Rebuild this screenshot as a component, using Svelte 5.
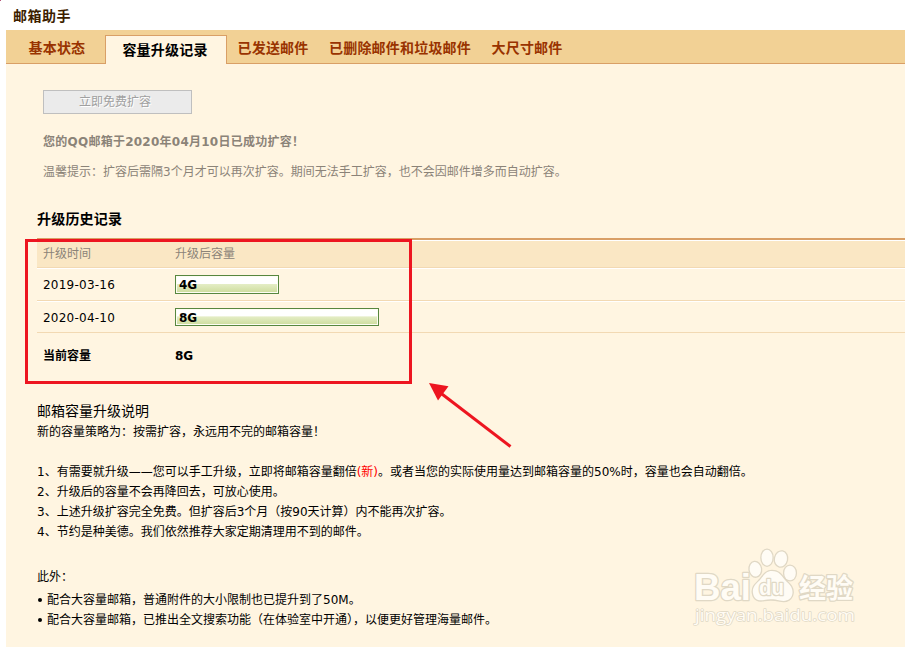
<script>
	let activeTab = 1;

	const tabs = ['基本状态', '容量升级记录', '已发送邮件', '已删除邮件和垃圾邮件', '大尺寸邮件'];

	const history = [
		{ date: '2019-03-16', size: 4, width: 104 },
		{ date: '2020-04-10', size: 8, width: 204 }
	];

	const extras = [
		'配合大容量邮箱，普通附件的大小限制也已提升到了50M。',
		'配合大容量邮箱，已推出全文搜索功能（在体验室中开通），以便更好管理海量邮件。'
	];
</script>

<div class="page">
	<h1>邮箱助手</h1>

	<div class="panel">
		<div class="tabs">
			{#each tabs as tab, index (tab)}
				<button class="tab" class:active={index === activeTab} on:click={() => (activeTab = index)}>{tab}</button>
			{/each}
		</div>

		<div class="content">
			<button class="expand" disabled>立即免费扩容</button>
			<p class="done">您的QQ邮箱于2020年04月10日已成功扩容！</p>
			<p class="tip">温馨提示：扩容后需隔3个月才可以再次扩容。期间无法手工扩容，也不会因邮件增多而自动扩容。</p>

			<h2>升级历史记录</h2>
			<div class="history">
				<div class="row head"><span>升级时间</span><span>升级后容量</span></div>
				{#each history as item (item.date)}
					<div class="row">
						<span class="date">{item.date}</span>
						<div class="bar" style="width: {item.width}px">{item.size}G</div>
					</div>
				{/each}
				<div class="row total"><span>当前容量</span><span>8G</span></div>
			</div>

			<div class="notes">
				<h3>邮箱容量升级说明</h3>
				<p>新的容量策略为：按需扩容，永远用不完的邮箱容量！</p>
				<div class="rules">
					<p>1、有需要就升级——您可以手工升级，立即将邮箱容量翻倍<span class="new">(新)</span>。或者当您的实际使用量达到邮箱容量的50%时，容量也会自动翻倍。</p>
					<p>2、升级后的容量不会再降回去，可放心使用。</p>
					<p>3、上述升级扩容完全免费。但扩容后3个月（按90天计算）内不能再次扩容。</p>
					<p>4、节约是种美德。我们依然推荐大家定期清理用不到的邮件。</p>
				</div>
				<p class="also">此外：</p>
				{#each extras as extra}
					<p class="extra"><span class="dot"></span>{extra}</p>
				{/each}
			</div>
		</div>
	</div>

	<div class="corner"></div>
	<div class="highlight"></div>
	<svg class="arrow" width="90" height="72" viewBox="0 0 90 72">
		<path d="M13 11 L85.500 66.500" stroke="#ed1520" stroke-width="3" />
		<path d="M4 3 L23.500 6.300 L13 20.500 Z" fill="#ed1520" />
	</svg>

	<svg class="watermark" width="176" height="84" viewBox="0 0 176 84">
		<g fill="#fffcf5" stroke="#e0d8c5" stroke-width="2.6" stroke-linejoin="round" paint-order="stroke">
			<text class="latin" x="2" y="54.5" font-size="37" textLength="57" lengthAdjust="spacingAndGlyphs">Bai</text>
			<ellipse cx="63.3" cy="24.3" rx="5.7" ry="7.3" transform="rotate(-8 63.3 24.3)" />
			<ellipse cx="75" cy="12.7" rx="5.5" ry="8" />
			<ellipse cx="89" cy="14" rx="6" ry="7.6" transform="rotate(12 89 14)" />
			<ellipse cx="98" cy="28" rx="5.8" ry="7.3" />
			<path d="M80 26 C74 26 72 30 68 35 C64 39 60 42 61 48 C62 55 67 56 72 55 C77 54 82 54 88 55.500 C95 57 100 54 100.500 48 C101 42 97 39 93 35 C89 30 87 26 80 26 Z" />
			<text class="latin" x="67" y="50" font-size="22" textLength="25" lengthAdjust="spacingAndGlyphs">du</text>
			<text class="hanzi" x="107" y="52.5" font-size="27" textLength="54" lengthAdjust="spacingAndGlyphs">经验</text>
			<text class="site" x="3" y="76" font-size="17" textLength="160" lengthAdjust="spacingAndGlyphs" stroke-width="1.4">jingyan.baidu.com</text>
		</g>
	</svg>
</div>

<style>
	:global(body) {
		margin: 0;
		background: #fff;
	}
	.page {
		position: relative;
		box-sizing: border-box;
		width: 905px;
		height: 647px;
		padding-left: 6px;
		overflow: hidden;
		font: 12px/20px "DejaVu Sans", "Noto Sans CJK SC", sans-serif;
		color: #000;
	}
	h1,
	h2,
	h3,
	p {
		margin: 0;
	}
	h1 {
		height: 30px;
		padding-left: 7px;
		box-sizing: border-box;
		font-size: 14px;
		line-height: 32px;
		letter-spacing: 0.5px;
		color: #3c1e00;
	}
	.panel {
		height: 617px;
		background: #fff5e1;
	}
	.tabs {
		display: flex;
		align-items: flex-end;
		box-sizing: border-box;
		height: 34px;
		padding-left: 12px;
		background: linear-gradient(#d99f66, #d99f66) bottom / 100% 1px no-repeat #f2d195;
	}
	.tab {
		height: 34px;
		padding: 2px 10px 0 10.5px;
		border: 0;
		background: none;
		font: bold 14px/32px "DejaVu Sans", "Noto Sans CJK SC", sans-serif;
		letter-spacing: 0.2px;
		white-space: nowrap;
		color: #993300;
		cursor: pointer;
	}
	.tab:first-child {
		margin-right: 9.7px;
	}
	.tab.active {
		box-sizing: border-box;
		width: 122px;
		height: 29px;
		padding: 0 2px 0 0;
		border: 1px solid #d99f66;
		border-bottom: 0;
		background: #fff5e1;
		line-height: 26px;
		color: #000;
	}
	.content {
		padding: 26px 0 0 31px;
	}
	.expand {
		display: block;
		width: 149px;
		height: 24px;
		margin-left: 6px;
		padding: 1px 5px 0 0;
		border: 1px solid #bfbfbf;
		background: #ebebeb;
		font: 12px/21px "DejaVu Sans", "Noto Sans CJK SC", sans-serif;
		color: #a0a0a0;
		text-shadow: 1px 1px 0 #fff;
	}
	.done,
	.tip {
		margin-left: 6px;
		color: #8b8378;
	}
	.done {
		margin-top: 18px;
		font-weight: bold;
		letter-spacing: 0.25px;
	}
	.tip {
		margin-top: 10px;
	}
	h2 {
		margin-top: 27px;
		font-size: 14px;
		line-height: 20px;
		letter-spacing: 0.2px;
	}
	.history {
		margin-top: 9px;
		border-top: 2px solid #d99f66;
	}
	.row {
		display: flex;
		align-items: center;
		box-sizing: border-box;
		height: 32px;
		padding-left: 6px;
		border-top: 1px solid #fff;
		border-bottom: 1px solid #f2d9b3;
	}
	.row:nth-child(2) {
		height: 33px;
	}
	.row > span:first-child {
		width: 132px;
	}
	.row.head {
		height: 28px;
		padding-bottom: 1px;
		background: #fae7c4;
		color: #8b8378;
	}
	.row.total {
		height: 45px;
		margin-bottom: 2px;
		border: 0;
		font-weight: bold;
	}
	.date {
		letter-spacing: 0.23px;
	}
	.row:nth-child(3) .date {
		padding-top: 1px;
	}
	.bar {
		box-sizing: border-box;
		height: 18px;
		padding-left: 3px;
		border: 1px solid #57873f;
		background: linear-gradient(#fff 0%, #fff 45%, #e4edc5 48%, #cddc9c 100%);
		box-shadow: inset 0 0 0 1px #fdfdf3;
		font-weight: bold;
		line-height: 18px;
	}
	.row:nth-child(2) .bar {
		height: 19px;
	}
	.notes {
		padding-top: 21px;
		white-space: nowrap;
	}
	h3 {
		font-size: 14px;
		font-weight: normal;
		line-height: 21px;
	}
	.rules {
		margin-top: 20px;
	}
	.new {
		color: #f00;
	}
	.also {
		margin: 25px 0 3px;
	}
	.extra {
		display: flex;
		align-items: center;
	}
	.dot {
		width: 4px;
		height: 4px;
		margin: 0 5px 0 1px;
		border-radius: 50%;
		background: #000;
	}
	.corner {
		position: absolute;
		top: 0;
		left: 0;
		width: 1px;
		height: 1px;
		background: #b5557a;
	}
	.highlight {
		position: absolute;
		top: 239px;
		left: 25px;
		box-sizing: border-box;
		width: 387px;
		height: 145px;
		border: 3px solid #ed1520;
	}
	.arrow {
		position: absolute;
		top: 380px;
		left: 425px;
	}
	.watermark {
		position: absolute;
		top: 545px;
		left: 692px;
	}
	.latin {
		font-family: "Liberation Sans", sans-serif;
		font-weight: bold;
	}
	.hanzi {
		font-family: "Noto Sans CJK SC", sans-serif;
		font-weight: bold;
	}
	.site {
		font-family: "Open Sans", sans-serif;
	}
</style>
